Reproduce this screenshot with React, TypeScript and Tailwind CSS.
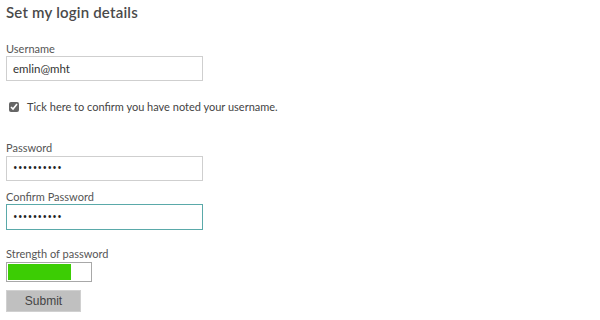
export default function App() {
  return (
    <div className="w-[600px] h-[320px] bg-white px-[6px] pt-[2px] text-[#444] font-['Open_Sans',sans-serif]">
      <h1 className="text-[15px] font-semibold leading-[20px] text-[#4a4a4a] font-['Lato',sans-serif] tracking-[0.2px]">Set my login details</h1>

      <div className="mt-[20px]">
        <label className="block text-[11px] leading-[14px] text-[#555] font-['Lato',sans-serif]">Username</label>
        <div className="mt-0 w-[197px] h-[25px] border border-[#cfcfcf] flex items-center px-[6px] text-[11.5px] text-[#333] font-['Lato',sans-serif]">
          emlin@mht
        </div>
      </div>

      <div className="mt-[18px] flex items-center gap-[8px] pl-[3px]">
        <input type="checkbox" defaultChecked className="w-[10px] h-[10px] m-0 accent-[#666]" />
        <span className="text-[11px] text-[#444] font-['Lato',sans-serif]">Tick here to confirm you have noted your username.</span>
      </div>

      <div className="mt-[25px]">
        <label className="block text-[11px] leading-[14px] text-[#555] font-['Lato',sans-serif]">Password</label>
        <div className="mt-[1px] w-[197px] h-[25px] border border-[#cfcfcf] flex items-center px-[6px] text-[12px] text-[#222] tracking-[0.4px]">
          ••••••••••
        </div>
      </div>

      <div className="mt-[9px]">
        <label className="block text-[11px] leading-[14px] text-[#555] font-['Lato',sans-serif]">Confirm Password</label>
        <div className="mt-0 w-[197px] h-[26px] border border-[#5aa9a9] flex items-center px-[6px] text-[12px] text-[#222] tracking-[0.4px]">
          ••••••••••
        </div>
      </div>

      <div className="mt-[17px]">
        <label className="block text-[11px] leading-[14px] text-[#555] font-['Lato',sans-serif]">Strength of password</label>
        <div className="mt-[1px] w-[86px] h-[20px] border border-[#a8a8a8] p-[1px] bg-white">
          <div className="h-full w-[63px] bg-[#3ccd04]" />
        </div>
      </div>

      <button className="mt-[8px] w-[75px] h-[22px] bg-[#c0c0c0] text-[12px] text-[#444] font-['Liberation_Sans',sans-serif] border border-[#d0d0d0]">
        Submit
      </button>
    </div>
  );
}
